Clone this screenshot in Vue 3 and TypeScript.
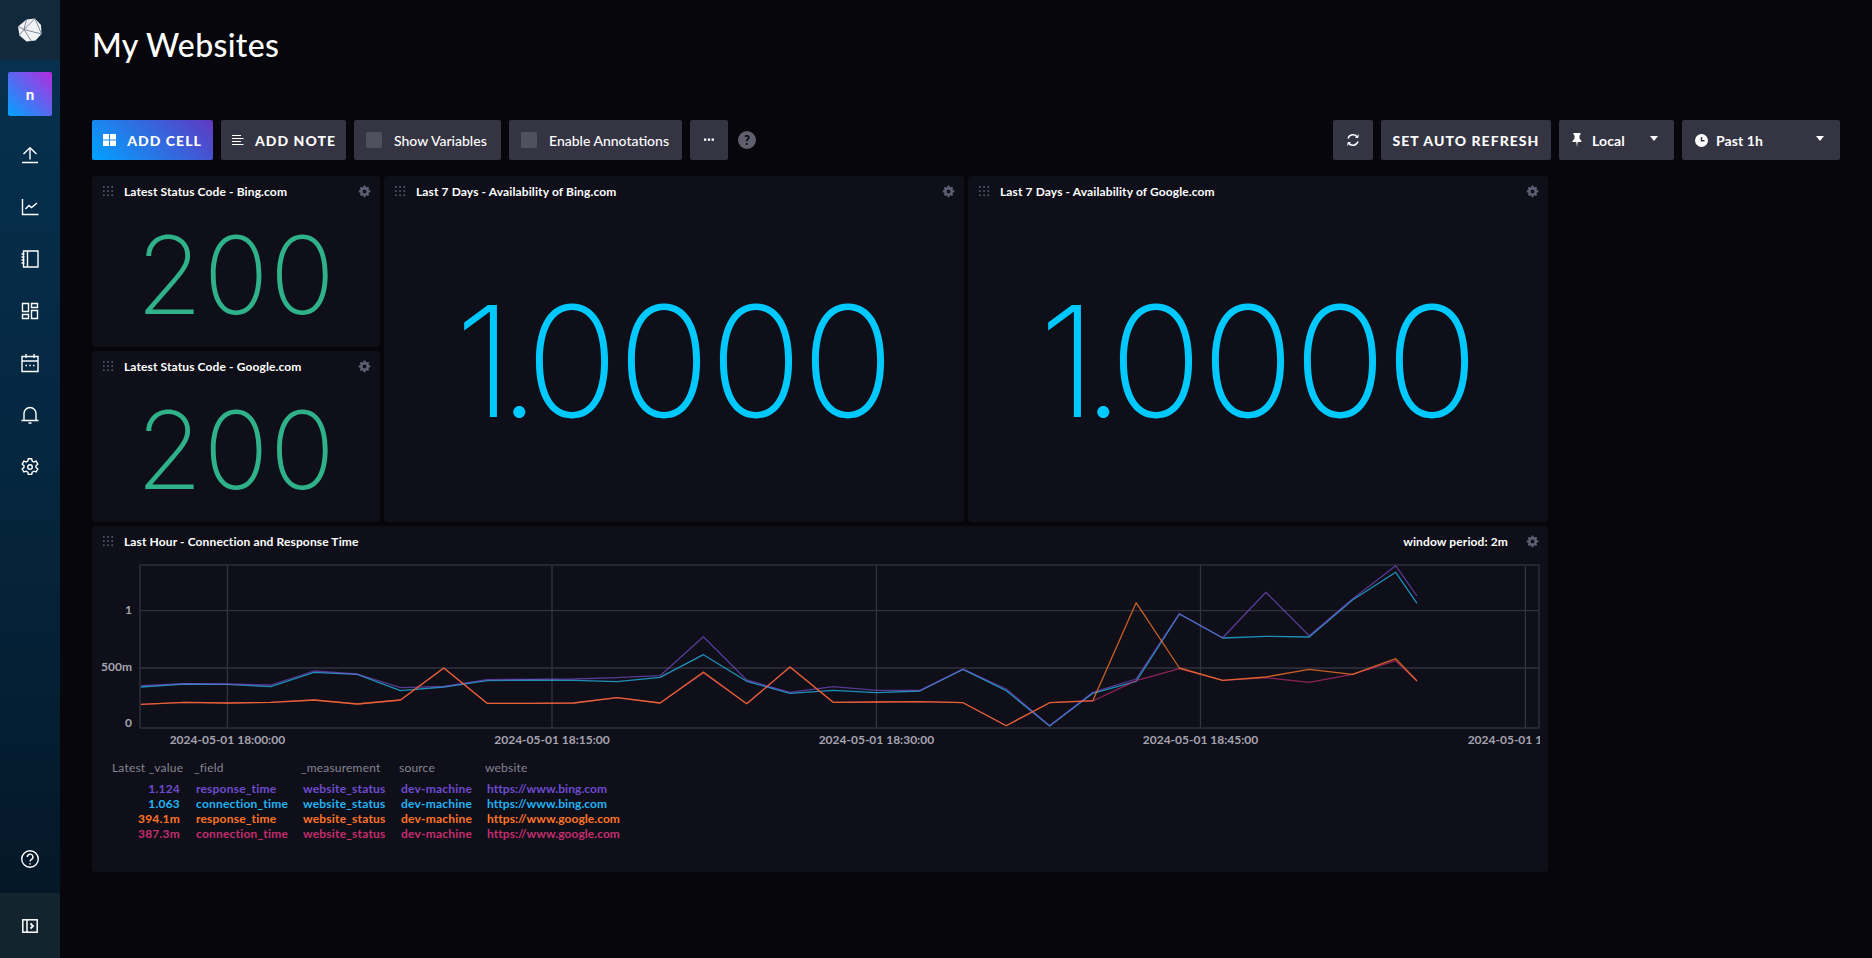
<script setup lang="ts">
const W = 1456
const H = 250
// chart coordinates are relative to the chart svg, whose origin is (92, 552) in the page
const ox = 92
const oy = 552
const xAt = (i: number) => 140.9 + 43.27 * i - ox
const yAt = (z: number) => 520 + z / 3 - oy
const toPts = (vals: number[]) => {
  const n = vals.length
  return vals
    .map((v, i) => {
      const x = i === n - 1 ? 1417 - ox : xAt(i)
      return `${x.toFixed(1)},${yAt(v).toFixed(1)}`
    })
    .join(' ')
}
const purple = [497, 491, 492, 495, 453, 462, 503, 499, 479, 478, 477, 473, 467, 350, 480, 517, 500, 511, 511, 447, 507, 617, 517, 477, 281, 353, 217, 347, 237, 137, 228]
const cyan = [501, 492, 493, 500, 457, 463, 512, 501, 482, 480, 481, 485, 472, 404, 484, 520, 511, 518, 513, 448, 512, 618, 520, 484, 282, 354, 349, 351, 240, 157, 250]
const magenta = [553, 547, 549, 547, 540, 552, 540, 444, 550, 550, 549, 533, 549, 459, 551, 441, 547, 546, 545, 548, 617, 548, 543, 482, 446, 481, 473, 487, 463, 422, 483]
const orange = [553, 547, 549, 547, 540, 552, 540, 444, 550, 550, 549, 533, 549, 456, 551, 441, 547, 546, 545, 548, 617, 548, 542, 248, 444, 481, 471, 448, 463, 416, 483]
const series = [
  { c: '#22b0e0', o: 0.8, pts: toPts(cyan) },
  { c: '#7f52d8', o: 0.65, pts: toPts(purple) },
  { c: '#b8296f', o: 0.75, pts: toPts(magenta) },
  { c: '#ff7426', o: 0.78, pts: toPts(orange) },
]
const plot = { l: 140 - ox, r: 1539 - ox, t: 565 - oy, b: 728 - oy }
const hLines = [610.7 - oy, 668 - oy]
const ticks = [
  { x: 227.4 - ox, l: '2024-05-01 18:00:00' },
  { x: 552 - ox, l: '2024-05-01 18:15:00' },
  { x: 876.4 - ox, l: '2024-05-01 18:30:00' },
  { x: 1200.5 - ox, l: '2024-05-01 18:45:00' },
  { x: 1525.4 - ox, l: '2024-05-01 19:00:00' },
]
const yLabels = [
  { y: 610.7 - oy, l: '1' },
  { y: 668 - oy, l: '500m' },
  { y: 724 - oy, l: '0' },
]
const legendRows = [
  { cls: 'c-purple', v: '1.124', f: 'response_time', w: 'https://www.bing.com' },
  { cls: 'c-cyan', v: '1.063', f: 'connection_time', w: 'https://www.bing.com' },
  { cls: 'c-orange', v: '394.1m', f: 'response_time', w: 'https://www.google.com' },
  { cls: 'c-pink', v: '387.3m', f: 'connection_time', w: 'https://www.google.com' },
]
const dots = [0, 1, 2].flatMap((r) => [0, 1, 2].map((c) => ({ x: 1 + c * 4.2, y: 1 + r * 4.2 })))
const gear = 'M6.9 0.6h2.2l.4 1.9c.4.1.8.3 1.1.5l1.7-1 1.5 1.5-1 1.7c.2.4.4.7.5 1.1l1.9.4v2.2l-1.9.4c-.1.4-.3.8-.5 1.1l1 1.7-1.5 1.5-1.7-1c-.3.2-.7.4-1.1.5l-.4 1.9H6.9l-.4-1.9c-.4-.1-.8-.3-1.1-.5l-1.7 1-1.5-1.500 1-1.700c-.2-.3-.4-.7-.5-1.100L.8 9.100V6.900l1.900-.4c.1-.4.3-.7.5-1.100l-1-1.700 1.500-1.500 1.700 1c.3-.2.7-.4 1.100-.5zM8 5.600a2.400 2.400 0 1 0 0 4.800 2.400 2.400 0 0 0 0-4.800z'
const cards = [
  { cls: 'a1', title: 'Latest Status Code - Bing.com', head: '', big: '200', kind: 'green' },
  { cls: 'a2', title: 'Last 7 Days - Availability of Bing.com', head: '1.', big: '0000', kind: 'blue' },
  { cls: 'a3', title: 'Last 7 Days - Availability of Google.com', head: '1.', big: '0000', kind: 'blue' },
  { cls: 'a4', title: 'Latest Status Code - Google.com', head: '', big: '200', kind: 'green' },
]
</script>

<template>
  <div class="app">
    <aside class="side">
      <div class="logo">
        <svg width="24" height="24" viewBox="0 0 24 24">
          <path d="M8.500 1.500 17 .5l6 6.500.5 9-6 6.500-9 1-7-6-1.500-9z" fill="#f2f2f5" />
          <path d="M8.500 1.500 6 11.500l7.500 11.800M6 11.500l17.500 4.500M6 11.500 17 .5M17 .5l6.500 15.500M.5 8.500 6 11.500M6 11.500 1.500 17" fill="none" stroke="#5f7080" stroke-width="0.800" />
        </svg>
      </div>
      <div class="avatar">n</div>
      <nav class="nav">
        <svg class="ni" viewBox="0 0 20 20"><path d="M10 14.500V3M3.500 9 10 2.700 16.500 9M2 17.500h16" /></svg>
        <svg class="ni" viewBox="0 0 20 20"><path d="M2.500 2v15.500h16M5.500 12l3.500-3.500 2.500 2 5.500-4.500" /></svg>
        <svg class="ni" viewBox="0 0 20 20"><path d="M3.500 2h14.500v16H3.500zM7.500 2v16M1.500 5h3M1.500 8h3M1.500 11h3M1.500 14h3" /></svg>
        <svg class="ni" viewBox="0 0 20 20"><path d="M2.500 2.500h6v8h-6zM2.500 13.500h6v4h-6zM11.500 2.500h6v4h-6zM11.500 9.500h6v8h-6z" /></svg>
        <svg class="ni" viewBox="0 0 20 20"><path d="M2 3.500h16v15H2zM2 8h16M6 1v4M14 1v4M5.500 12.500h1.500M9.300 12.500h1.500M13 12.500h1.500" /></svg>
        <svg class="ni" viewBox="0 0 20 20"><path d="M4 15V8.500a6 6 0 0 1 12 0V15M1.500 15.500h17M8.500 18h3" /></svg>
        <svg class="ni" viewBox="0 0 20 20"><path d="M8.300 1.800h3.400l.5 2.300 1.700.9 2.200-.8 1.700 3-1.800 1.500v1.800l1.800 1.500-1.700 3-2.200-.8-1.700.9-.5 2.300H8.300l-.5-2.300-1.700-.9-2.200.8-1.700-3 1.800-1.500V8.700L2.200 7.200l1.700-3 2.200.8 1.700-.9z" /><circle cx="10" cy="10" r="2.300" /></svg>
      </nav>
      <svg class="ni help" viewBox="0 0 20 20"><circle cx="10" cy="10" r="8.300" /><path d="M7.300 8a2.800 2.800 0 1 1 4.200 2.400c-1 .6-1.500 1-1.500 2.100M10 14.200v1.400" /></svg>
      <div class="foot">
        <svg width="16" height="14" viewBox="0 0 16 14" fill="none" stroke="#fff" stroke-width="1.500"><rect x="0.800" y="0.800" width="14.400" height="12.400" /><path d="M5 1v12" /><path d="m8.500 4.500 2.500 2.500-2.500 2.500" stroke-width="1.800" /></svg>
      </div>
    </aside>

    <main class="main">
      <h1 class="title">My Websites</h1>

      <div class="toolbar">
        <div class="tools">
          <button class="btn primary w-cell">
            <svg width="13" height="12" viewBox="0 0 13 12" fill="#fff"><rect width="6" height="5.500" /><rect x="7" width="6" height="5.500" /><rect y="6.500" width="6" height="5.500" /><rect x="7" y="6.500" width="6" height="5.500" /></svg>
            <span>ADD CELL</span>
          </button>
          <button class="btn w-note">
            <svg width="13" height="12" viewBox="0 0 13 12" stroke="#fff" stroke-width="1.200"><path d="M1 1.500h9M1 4.500h11.500M1 7.500h9M1 10.500h11.500" /></svg>
            <span>ADD NOTE</span>
          </button>
          <button class="btn soft w-vars"><i class="box"></i><span>Show Variables</span></button>
          <button class="btn soft w-ann"><i class="box"></i><span>Enable Annotations</span></button>
          <button class="btn w-more"><svg width="10" height="4" viewBox="0 0 10 4" fill="#fff"><rect y="0.500" width="2.300" height="2.300" /><rect x="3.800" y="0.500" width="2.300" height="2.300" /><rect x="7.600" y="0.500" width="2.300" height="2.300" /></svg></button>
          <span class="qmark">?</span>
        </div>
        <div class="tools">
          <button class="btn w-ref">
            <svg width="14" height="14" viewBox="0 0 14 14" fill="none" stroke="#fff" stroke-width="1.500"><path d="M2 5.500A5.400 5.400 0 0 1 11.500 4M12 8.500A5.400 5.400 0 0 1 2.500 10" /><path d="m12.200 1.500-.2 3-2.800-.3M1.800 12.500l.2-3 2.800.3" stroke-width="1" /></svg>
          </button>
          <button class="btn w-auto"><span>SET AUTO REFRESH</span></button>
          <button class="btn drop w-local">
            <svg width="10" height="14" viewBox="0 0 10 14" fill="#fff"><path d="M1.500 0h7v1.500L7.500 2.500v3l2 2.500v1H5.700l-.7 5-.7-5H.5V8l2-2.500v-3l-1-1z" /></svg>
            <span class="dl">Local</span><i class="caret"></i>
          </button>
          <button class="btn drop w-past">
            <svg width="13" height="13" viewBox="0 0 13 13"><circle cx="6.500" cy="6.500" r="6.500" fill="#fff" /><path d="M6.500 3v3.800h3" fill="none" stroke="#343444" stroke-width="1.500" /></svg>
            <span class="dl">Past 1h</span><i class="caret"></i>
          </button>
        </div>
      </div>

      <section class="grid">
        <article v-for="c in cards" :key="c.cls" class="card" :class="c.cls">
          <header class="head">
            <svg class="dots" width="11" height="11" viewBox="0 0 11 11" fill="#55556a"><rect v-for="(d, i) in dots" :key="i" :x="d.x - 1" :y="d.y - 1" width="1.700" height="1.700" /></svg>
            <span class="ct">{{ c.title }}</span>
            <svg class="gear" width="13" height="13" viewBox="0 0 16 16" fill="#5f5f73"><path fill-rule="evenodd" :d="gear" /></svg>
          </header>
          <div class="stat" :class="c.kind"><span><span class="tight">{{ c.head }}</span>{{ c.big }}</span></div>
        </article>

        <article class="card a5">
          <header class="head">
            <svg class="dots" width="11" height="11" viewBox="0 0 11 11" fill="#55556a"><rect v-for="(d, i) in dots" :key="i" :x="d.x - 1" :y="d.y - 1" width="1.700" height="1.700" /></svg>
            <span class="ct">Last Hour - Connection and Response Time</span>
            <span class="ct wp">window period: 2m</span>
            <svg class="gear" width="13" height="13" viewBox="0 0 16 16" fill="#5f5f73"><path fill-rule="evenodd" :d="gear" /></svg>
          </header>
          <svg class="chart" :width="W" :height="H - 50" :viewBox="`0 0 ${W} ${H - 50}`">
            <defs>
              <clipPath id="lab"><rect x="0" y="0" :width="plot.r + 1" :height="H" /></clipPath>
            </defs>
            <g class="gridl">
              <line v-for="t in ticks" :key="t.x" :x1="t.x" :x2="t.x" :y1="plot.t" :y2="plot.b" />
              <line v-for="y in hLines" :key="y" :x1="plot.l" :x2="plot.r" :y1="y" :y2="y" />
              <rect :x="plot.l" :y="plot.t" :width="plot.r - plot.l" :height="plot.b - plot.t" fill="none" />
            </g>
            <polyline v-for="s in series" :key="s.c" :points="s.pts" fill="none" :stroke="s.c" stroke-width="1.300" :stroke-opacity="s.o" stroke-linejoin="round" />
            <g clip-path="url(#lab)">
              <text v-for="t in ticks" :key="t.l" class="tl" :x="t.x" :y="plot.b + 16" text-anchor="middle">{{ t.l }}</text>
            </g>
            <text v-for="y in yLabels" :key="y.l" class="tl" :x="plot.l - 8" :y="y.y + 3" text-anchor="end">{{ y.l }}</text>
          </svg>
          <div class="legend">
            <div class="lh">Latest _value</div><div class="lh">_field</div><div class="lh">_measurement</div><div class="lh">source</div><div class="lh">website</div>
            <template v-for="r in legendRows" :key="r.cls + r.v">
              <div class="lc val" :class="r.cls">{{ r.v }}</div>
              <div class="lc" :class="r.cls">{{ r.f }}</div>
              <div class="lc" :class="r.cls">website_status</div>
              <div class="lc" :class="r.cls">dev-machine</div>
              <div class="lc url" :class="r.cls">{{ r.w }}</div>
            </template>
          </div>
        </article>
      </section>
    </main>
  </div>
</template>

<style>
html, body { margin: 0; background: #07070e; }
</style>

<style scoped>
.app { display: flex; width: 1872px; height: 958px; overflow: hidden; background: #06060c; font-family: "Lato", "Noto Sans", sans-serif; color: #fff; }
.side { width: 60px; height: 958px; flex: none; display: flex; flex-direction: column; align-items: center; background: linear-gradient(180deg, #063250 0%, #05263f 50%, #041524 100%); }
.logo { width: 60px; height: 60px; display: flex; align-items: center; justify-content: center; background: #12293b; }
.avatar { width: 44px; height: 44px; margin-top: 12px; border-radius: 2px; background: linear-gradient(45deg, #00a3ff 0%, #b32be0 100%); display: flex; align-items: center; justify-content: center; font-weight: 900; font-size: 15px; }
.nav { display: flex; flex-direction: column; align-items: center; gap: 32px; margin-top: 29px; }
.ni { width: 20px; height: 20px; fill: none; stroke: #fff; stroke-width: 1.400; display: block; }
.help { margin-top: auto; margin-bottom: 24px; }
.foot { width: 60px; height: 65px; background: #13242f; display: flex; align-items: center; justify-content: center; }

.main { flex: 1; min-width: 0; padding: 0 32px; }
.title { margin: 0; height: 120px; padding-top: 26px; box-sizing: border-box; font-size: 32px; line-height: 38px; font-weight: 500; letter-spacing: .35px; }

.toolbar { display: flex; justify-content: space-between; height: 40px; margin-bottom: 16px; }
.tools { display: flex; gap: 8px; align-items: center; }
.btn { height: 40px; border: 0; border-radius: 2px; background: #343443; color: #fff; font-family: inherit; display: flex; align-items: center; justify-content: center; font-size: 14px; font-weight: 900; letter-spacing: 1.050px; padding: 0; }
.btn.primary { background: linear-gradient(45deg, #00a3ff 0%, #5f38c2 100%); }
.btn svg + span { margin-left: 11px; }
.w-cell { width: 121px; }
.w-note { width: 125px; }
.w-vars { width: 147px; }
.w-ann { width: 173px; }
.w-more { width: 38px; }
.w-ref { width: 40px; }
.w-auto { width: 170px; }
.w-local { width: 115px; }
.w-past { width: 158px; }
.soft { font-weight: 500; letter-spacing: 0; justify-content: flex-start; padding-left: 12px; }
.soft span { margin-left: 12px; }
.box { width: 16px; height: 16px; border-radius: 2px; background: #50505f; display: block; }
.qmark { width: 18px; height: 18px; margin-left: 2px; border-radius: 50%; background: #5f5f6e; color: #0a0a12; font-size: 13px; font-weight: 900; text-align: center; line-height: 18px; }
.drop { justify-content: flex-start; padding-left: 13px; font-weight: 700; letter-spacing: .1px; position: relative; }
.drop svg + .dl { margin-left: 10px; }
.w-past svg + .dl { margin-left: 8px; }
.caret { position: absolute; right: 16px; top: 16px; width: 0; height: 0; border-left: 4.500px solid transparent; border-right: 4.500px solid transparent; border-top: 5px solid #fff; }

.grid { display: grid; width: 1456px; grid-template-columns: 288px 580px 580px; grid-template-rows: 171px 171px 346px; gap: 4px; }
.card { background: #0f0f19; border-radius: 4px; position: relative; display: flex; flex-direction: column; min-width: 0; overflow: hidden; }
.a1 { grid-column: 1; grid-row: 1; }
.a2 { grid-column: 2; grid-row: 1 / span 2; }
.a3 { grid-column: 3; grid-row: 1 / span 2; }
.a4 { grid-column: 1; grid-row: 2; }
.a5 { grid-column: 1 / -1; grid-row: 3; }
.head { height: 32px; margin-top: -1px; flex: none; display: flex; align-items: center; padding: 0 9px 0 11px; }
.dots { flex: none; }
.ct { margin-left: 10px; font-size: 12px; font-weight: 700; white-space: nowrap; letter-spacing: .12px; }
.wp { margin-left: auto; margin-right: 18px; }
.gear { margin-left: auto; flex: none; }
.wp + .gear { margin-left: 0; }
.stat { flex: 1; display: flex; align-items: center; justify-content: center; font-family: "Inter", sans-serif; line-height: 1; padding-bottom: 8px; }
.green { color: #2fb18a; font-size: 108px; font-weight: 170; letter-spacing: 1px; padding-bottom: 4px; }
.blue { color: #00c9ff; font-size: 154px; font-weight: 170; letter-spacing: -1px; }
.tight { letter-spacing: -15px; }
.chart { display: block; flex: none; margin-top: -5px; }
.gridl line, .gridl rect { stroke: #33333f; stroke-width: 1.300; }
.tl { font-size: 12px; font-weight: 700; fill: #a4a4b0; font-family: "Lato", sans-serif; }
.legend { display: grid; grid-template-columns: 82px 107px 98px 86px auto; justify-content: start; padding-left: 20px; margin-top: 8px; font-size: 12px; grid-template-rows: 21px repeat(4, 15px); letter-spacing: .2px; }
.lh { color: #858594; line-height: 15px; font-weight: 400; white-space: nowrap; }
.lc { font-weight: 700; line-height: 15px; padding-left: 2px; white-space: nowrap; }
.url { letter-spacing: .05px; }
.val { text-align: right; padding: 0 14px 0 0; }
.c-purple { color: #6f4bd0; }
.c-cyan { color: #22b3f5; }
.c-orange { color: #ff7426; }
.c-pink { color: #c42d6e; }
</style>
